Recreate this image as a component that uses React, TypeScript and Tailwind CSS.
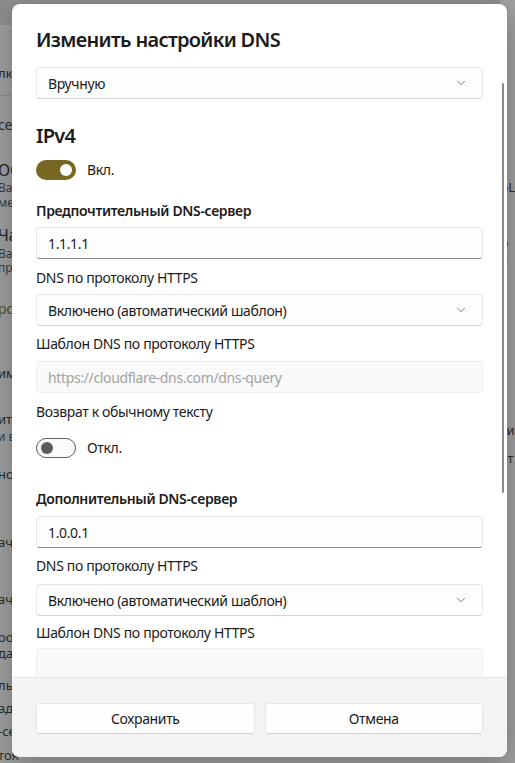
import React, { useState } from 'react';
import { ChevronDown } from 'lucide-react';

const font = { fontFamily: '"Noto Sans", "Open Sans", sans-serif' };

// Rows of the settings page that sit behind the dialog
const leftRows: { text: string; h: string; cls: string }[] = [
  { text: 'сеть', h: 'h-[36px] items-end', cls: 'text-[14px] text-[#2b2b2b]' },
  { text: 'Обзор', h: 'h-[46px] items-end', cls: 'text-[16px] text-[#1f1f1f]' },
  { text: 'Вас', h: 'h-[16px] items-end', cls: 'text-[12px] text-[#3d3d3d]' },
  { text: 'мест', h: 'h-[15px] items-end', cls: 'text-[12px] text-[#3d3d3d]' },
  { text: 'Часы', h: 'h-[34px] items-end', cls: 'text-[16px] text-[#1f1f1f]' },
  { text: 'Вас', h: 'h-[17px] items-end', cls: 'text-[12px] text-[#3d3d3d]' },
  { text: 'про', h: 'h-[14px] items-end', cls: 'text-[12px] text-[#3d3d3d]' },
  { text: 'рос', h: 'h-[42px] items-end', cls: 'text-[14px] text-[#5d5320]' },
  { text: 'имя', h: 'h-[64px] items-end', cls: 'text-[13px] text-[#2b2b2b]' },
  { text: 'ить', h: 'h-[46px] items-end', cls: 'text-[13px] text-[#2b2b2b]' },
  { text: 'и в', h: 'h-[17px] items-end', cls: 'text-[12px] text-[#3d3d3d]' },
  { text: 'ное', h: 'h-[38px] items-end', cls: 'text-[13px] text-[#2b2b2b]' },
  { text: 'ача', h: 'h-[68px] items-end', cls: 'text-[13px] text-[#2b2b2b]' },
  { text: 'ача', h: 'h-[57px] items-end', cls: 'text-[13px] text-[#2b2b2b]' },
  { text: 'оос', h: 'h-[38px] items-end', cls: 'text-[13px] text-[#2b2b2b]' },
  { text: 'дас', h: 'h-[16px] items-end', cls: 'text-[13px] text-[#2b2b2b]' },
  { text: 'льн', h: 'h-[32px] items-end', cls: 'text-[13px] text-[#2b2b2b]' },
  { text: 'адр', h: 'h-[23px] items-end', cls: 'text-[13px] text-[#2b2b2b]' },
  { text: '-сер', h: 'h-[23px] items-end', cls: 'text-[13px] text-[#2b2b2b]' },
  { text: 'тоя', h: 'h-[24px] items-end', cls: 'text-[13px] text-[#2b2b2b]' },
];

const rightRows: { text: string; h: string }[] = [
  { text: 'оL', h: 'h-[169px]' },
  { text: 'о', h: 'h-[56px]' },
  { text: 'л', h: 'h-[13px]' },
  { text: 'ти', h: 'h-[174px]' },
  { text: 'ет', h: 'h-[28px]' },
];

function Toggle({ on, onChange }: { on: boolean; onChange: () => void }) {
  return (
    <button
      onClick={onChange}
      className={`flex h-[20px] w-[40px] items-center rounded-full px-[4px] ${
        on ? 'justify-end bg-[#786722]' : 'justify-start border border-[#5e5e5e] bg-[#fbfbfb] px-[3px]'
      }`}
    >
      <span
        className={`block rounded-full ${on ? 'h-[12px] w-[12px] bg-white' : 'h-[12px] w-[12px] bg-[#5b5b5b]'}`}
      />
    </button>
  );
}

function Select({ value }: { value: string }) {
  return (
    <div className="flex h-[32px] items-center justify-between rounded-[4px] border border-[#e8e8e8] border-b-[#d3d3d3] bg-[#fdfdfd] pl-[11px] pr-[14px] text-[14px] tracking-[-0.35px] text-[#1b1b1b]">
      <span>{value}</span>
      <ChevronDown size={14} strokeWidth={1.4} className="text-[#5f5f5f]" />
    </div>
  );
}

function TextBox({ value, disabled }: { value: string; disabled?: boolean }) {
  return (
    <div
      className={`flex h-[32px] items-center rounded-[4px] border px-[11px] text-[14px] tracking-[-0.35px] ${
        disabled
          ? 'border-[#eeeeee] bg-[#f9f9f9] text-[#a3a3a3]'
          : 'border-[#e6e6e6] border-b-[#8a8a8a] bg-[#fdfdfd] text-[#1b1b1b]'
      }`}
    >
      {value}
    </div>
  );
}

const label = 'text-[14px] leading-[20px] tracking-[-0.35px]';
const heading = 'text-[14px] font-semibold leading-[20px] tracking-[-0.35px]';

export default function App() {
  const [ipv4, setIpv4] = useState(true);
  const [plain, setPlain] = useState(false);

  return (
    <div className="relative flex h-[763px] w-[515px] overflow-hidden bg-[#a0a0a0]" style={font}>
      {/* settings page behind the modal */}
      <div className="flex w-[506px] flex-col">
        <div className="h-[25px] w-full bg-[#8e8e8e]" />
        <div className="border-b border-[#8f8f8f]">
          <div className="-ml-[2px] flex h-[70px] items-end pb-[15px] text-[13px] leading-none text-[#2b2b2b]">
            лючение
          </div>
        </div>
        {leftRows.map((r, i) => (
          <div key={i} className={`flex ${r.h} ${r.cls} -ml-[2px] leading-none`}>
            {r.text}
          </div>
        ))}
      </div>
      <div className="flex flex-col pt-[25px] text-[13px] leading-none text-[#2b2b2b]">
        {rightRows.map((r, i) => (
          <div key={i} className={`flex ${r.h} items-end`}>
            {r.text}
          </div>
        ))}
      </div>

      {/* DNS dialog */}
      <div className="absolute left-[12px] top-[4px] flex h-[753px] w-[495px] flex-col overflow-hidden rounded-[8px] bg-white shadow-[0_8px_32px_rgba(0,0,0,0.28)]">
        <div className="relative flex-1 overflow-hidden px-[24px] pt-[22px] text-[#1b1b1b]">
          <h2 className="text-[20px] font-semibold leading-[28px] tracking-[-0.7px]">Изменить настройки DNS</h2>
          <div className="mt-[13px]">
            <Select value="Вручную" />
          </div>

          <div className="mt-[23px] text-[20px] font-semibold leading-[28px] tracking-[-0.7px]">IPv4</div>
          <div className="mt-[10px] flex items-center gap-[11px]">
            <Toggle on={ipv4} onChange={() => setIpv4(!ipv4)} />
            <span className={label}>{ipv4 ? 'Вкл.' : 'Откл.'}</span>
          </div>

          <div className={`mt-[21px] ${heading}`}>Предпочтительный DNS-сервер</div>
          <div className="mt-[6px]">
            <TextBox value="1.1.1.1" />
          </div>
          <div className={`mt-[9px] ${label}`}>DNS по протоколу HTTPS</div>
          <div className="mt-[6px]">
            <Select value="Включено (автоматический шаблон)" />
          </div>
          <div className={`mt-[8px] ${label}`}>Шаблон DNS по протоколу HTTPS</div>
          <div className="mt-[7px]">
            <TextBox value="https://cloudflare-dns.com/dns-query" disabled />
          </div>
          <div className={`mt-[9px] ${label}`}>Возврат к обычному тексту</div>
          <div className="mt-[16px] flex items-center gap-[11px]">
            <Toggle on={plain} onChange={() => setPlain(!plain)} />
            <span className={label}>{plain ? 'Вкл.' : 'Откл.'}</span>
          </div>

          <div className={`mt-[31px] ${heading}`}>Дополнительный DNS-сервер</div>
          <div className="mt-[7px]">
            <TextBox value="1.0.0.1" />
          </div>
          <div className={`mt-[8px] ${label}`}>DNS по протоколу HTTPS</div>
          <div className="mt-[8px]">
            <Select value="Включено (автоматический шаблон)" />
          </div>
          <div className={`mt-[7px] ${label}`}>Шаблон DNS по протоколу HTTPS</div>
          <div className="mt-[5px]">
            <TextBox value="" disabled />
          </div>

          {/* scroll thumb */}
          <div className="absolute right-[3px] top-[79px] h-[410px] w-[2px] rounded-full bg-[#8a8a8a]" />
        </div>

        <div className="grid h-[80px] grid-cols-2 gap-[10px] border-t border-[#e5e5e5] bg-[#f3f3f3] px-[24px] pt-[25px]">
          <button className="h-[31px] rounded-[4px] border border-[#e5e5e5] border-b-[#d0d0d0] bg-[#fefefe] text-[14px] tracking-[-0.35px] text-[#1b1b1b]">
            Сохранить
          </button>
          <button className="h-[31px] rounded-[4px] border border-[#e5e5e5] border-b-[#d0d0d0] bg-[#fefefe] text-[14px] tracking-[-0.35px] text-[#1b1b1b]">
            Отмена
          </button>
        </div>
      </div>
    </div>
  );
}
